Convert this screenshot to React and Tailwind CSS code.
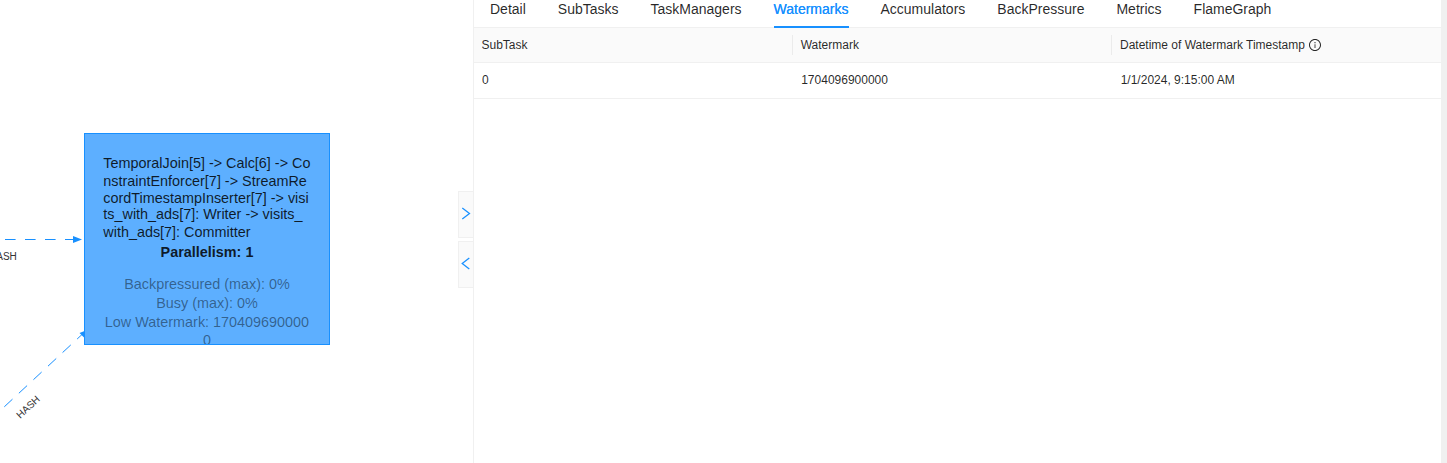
import React from "react";

const TABS = ["Detail", "SubTasks", "TaskManagers", "Watermarks", "Accumulators", "BackPressure", "Metrics", "FlameGraph"];

const NAME_LINES = [
  "TemporalJoin[5] -> Calc[6] -> Co",
  "nstraintEnforcer[7] -> StreamRe",
  "cordTimestampInserter[7] -> visi",
  "ts_with_ads[7]: Writer -> visits_",
  "with_ads[7]: Committer",
];

const NAME_LEADING = ["leading-[17px]", "leading-[18px]", "leading-[17px]", "leading-[15px]", "leading-[21px]"];

function Edges() {
  return (
    <svg className="absolute inset-0" width="473" height="463" fill="none">
      <path d="M5 239.5H74" stroke="#1890ff" strokeDasharray="10.6 9.4" />
      <path d="M73 236L82 239.500L73 243Z" fill="#1890ff" />
      <path d="M4.3 406.8L82 334.5" stroke="#1890ff" strokeDasharray="11.200 8.700" />
      <path d="M87 330L84.500 338L79.500 333Z" fill="#1890ff" />
      <text x="-11" y="260" fontSize="10" fill="#333" className="font-['Liberation_Sans',sans-serif]">HASH</text>
      <text transform="translate(20.3 419) rotate(-43)" fontSize="10" fill="#333" className="font-['Liberation_Sans',sans-serif]">HASH</text>
    </svg>
  );
}

function JobNode() {
  return (
    <div className="absolute left-[84px] top-[133px] h-[212px] w-[246px] overflow-hidden border border-[#1890ff] bg-[#5dafff] pt-[21px] text-[14.4px] text-black/85">
      <div className="pl-[18.300px]">
        {NAME_LINES.map((line, i) => (
          <div key={line} className={`whitespace-nowrap ${NAME_LEADING[i]}`}>{line}</div>
        ))}
      </div>
      <div className="-mt-[1px] text-center leading-[21px] font-bold">Parallelism: 1</div>
      <div className="mt-[12px] text-center leading-[18.8px] text-black/45">
        <div>Backpressured (max): 0%</div>
        <div>Busy (max): 0%</div>
        <div>Low Watermark: 170409690000</div>
        <div>0</div>
      </div>
    </div>
  );
}

function Handle({ d }) {
  return (
    <div className="flex h-[47px] w-[15px] items-center justify-center border border-r-0 border-[#f0f0f0] bg-[#fafafa] pb-[3px]">
      <svg width="14" height="14" viewBox="0 0 14 14" fill="none" stroke="#1890ff" strokeWidth="1.25">
        <path d={d} />
      </svg>
    </div>
  );
}

function InfoIcon() {
  return (
    <svg className="ml-1" width="12" height="12" viewBox="64 64 896 896" fill="currentColor">
      <path d="M512 64C264.600 64 64 264.600 64 512s200.600 448 448 448 448-200.600 448-448S759.400 64 512 64zm0 820c-205.400 0-372-166.600-372-372s166.600-372 372-372 372 166.600 372 372-166.600 372-372 372z" />
      <path d="M464 336a48 48 0 1 0 96 0 48 48 0 1 0-96 0zm72 112h-48c-4.400 0-8 3.600-8 8v272c0 4.400 3.600 8 8 8h48c4.400 0 8-3.600 8-8V456c0-4.400-3.600-8-8-8z" />
    </svg>
  );
}

export default function App() {
  return (
    <div className="flex h-[463px] w-[1447px] overflow-hidden bg-white font-['Liberation_Sans',Arial,sans-serif] text-black/85">
      <section className="relative h-full w-[473px] shrink-0 overflow-hidden">
        <Edges />
        <JobNode />
        <div className="absolute top-[191px] right-0 flex flex-col gap-[3px]">
          <Handle d="M3.300 2L10.500 7.500L3.300 13" />
          <Handle d="M10.300 2L3.200 7.500L10.300 13" />
        </div>
      </section>
      <section className="flex min-w-0 flex-1 flex-col border-l border-[#f0f0f0]">
        <nav className="flex h-7 shrink-0 gap-8 border-b border-[#f0f0f0] pl-4 text-[14px] leading-[22px]">
          {TABS.map((tab) => (
            <div
              key={tab}
              className={
                tab === "Watermarks"
                  ? "-mt-[2px] -mr-[0.6px] h-[30px] border-b-2 border-[#1890ff] pr-[0.6px] text-[#1890ff] [text-shadow:0_0_0.25px_currentColor]"
                  : "-mt-[2px] h-[30px]"
              }
            >
              {tab}
            </div>
          ))}
        </nav>
        <div className="grid h-[35px] shrink-0 grid-cols-[319px_319px_1fr] items-center border-b border-[#f0f0f0] bg-[#fafafa] text-[12px]">
          <div className="flex h-5 items-center border-r border-[#ebebeb] pl-[7.500px]">SubTask</div>
          <div className="flex h-5 items-center border-r border-[#ebebeb] pl-[7.700px]">Watermark</div>
          <div className="flex h-5 items-center pl-2">
            Datetime of Watermark Timestamp
            <InfoIcon />
          </div>
        </div>
        <div className="grid h-9 shrink-0 grid-cols-[319px_319px_1fr] items-center border-b border-[#f0f0f0] pb-[2px] text-[12px]">
          <div className="pl-2">0</div>
          <div className="pl-[8.200px]">1704096900000</div>
          <div className="pl-[8.700px]">1/1/2024, 9:15:00 AM</div>
        </div>
      </section>
      <div className="w-[6px] shrink-0 bg-[#f0f0f0]" />
    </div>
  );
}
